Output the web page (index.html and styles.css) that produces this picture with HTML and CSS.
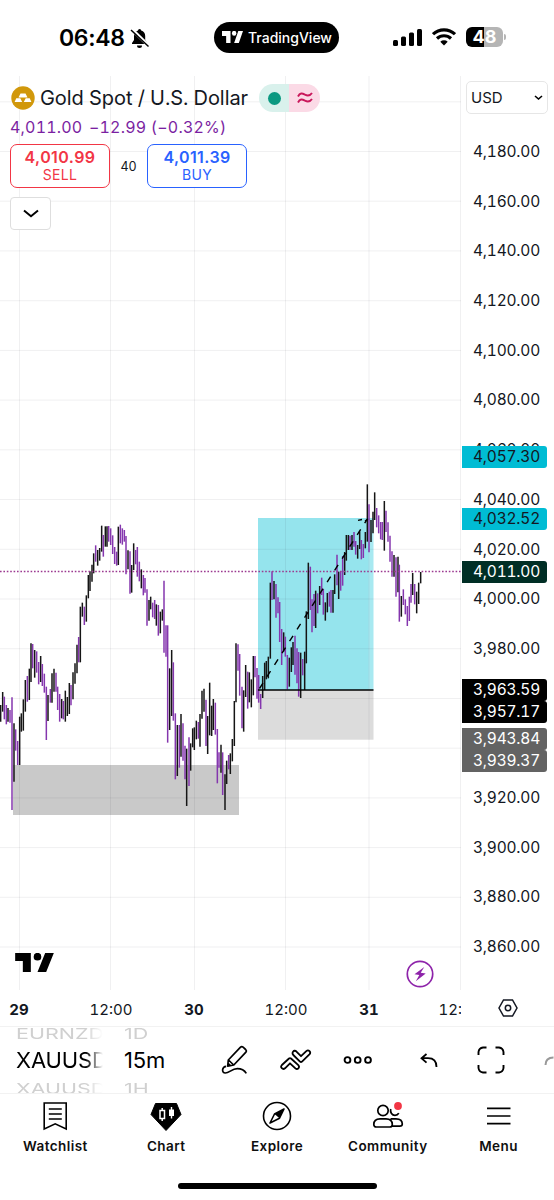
FILE: index.html
```html
<!DOCTYPE html>
<html lang="en">
<head>
    <meta charset="UTF-8">
    <meta name="viewport" content="width=device-width, initial-scale=1.0">
    <title>XAUUSD Chart</title>
    <link rel="stylesheet" href="styles.css">
</head>
<body>
    <div class="app">
        <!-- Status bar -->
        <header class="status-bar">
            <div class="clock">
                <span>06:48</span>
                <svg width="20" height="21" viewBox="0 0 20 21">
                    <path d="M2 16v-1l2-3V8c0-3 2-5 4-5.500a1.600 1.600 0 0 1 3.200 0c2.500.8 4 2.800 4 5.500v4l2 3v1zM7 17.500h5a2.500 2.500 0 0 1-5 0z" fill="#000"/>
                    <path d="M2 1.500 19 18" stroke="#fff" stroke-width="3.200"/>
                    <path d="M1 2 18.500 18.500" stroke="#000" stroke-width="1.500"/>
                </svg>
            </div>
            <div class="island">
                <svg width="21" height="12" viewBox="0 0 116 57" preserveAspectRatio="none" fill="#fff">
                    <path d="M0 0h47v57H23V24H0zM90 0h26L93 57H67z"/><circle cx="67" cy="11" r="12"/>
                </svg>
                <span>TradingView</span>
            </div>
            <div class="indicators">
                <svg width="29" height="19" viewBox="0 0 29 19">
                    <rect x="0" y="12" width="5" height="6" rx="1.500"/><rect x="8" y="8.500" width="5" height="9.500" rx="1.500"/>
                    <rect x="16" y="4.500" width="5" height="13.500" rx="1.500"/><rect x="24" y="1" width="5" height="17" rx="1.500"/>
                </svg>
                <svg width="24" height="18" viewBox="0 0 24 18" fill="none" stroke="#000" stroke-width="3.200">
                    <path d="M1 6.200a16 16 0 0 1 22 0M5 10.500a10.300 10.300 0 0 1 14 0"/><path d="M8.300 13.800a5.500 5.500 0 0 1 7.400 0L12 17.500z" fill="#000" stroke="none"/>
                </svg>
                <div class="battery"><span>48</span></div>
            </div>
        </header>

        <main class="chart">
            <div class="plot">
                <svg class="plot-svg" width="461" height="914" viewBox="0 76 461 914">
                    <!-- Drawn zones -->
                    <rect x="13" y="765" width="226" height="50" fill="#c9c9c9"/>
                    <rect x="258" y="518" width="115.500" height="172" fill="#a8e9f1"/>
                    <rect x="258" y="518" width="110.500" height="172" fill="#95e4ed"/>
                    <rect x="258" y="690" width="115.500" height="49.700" fill="#dcdcdc"/>
                    <!-- Grid -->
                    <path class="grid" d="M19.500 76V990M110.500 76V990M194.500 76V990M285.500 76V990M369 76V990M460.500 76V990"/>
                    <path class="grid" d="M0 101.800H461M0 151.500H461M0 201.200H461M0 250.900H461M0 300.700H461M0 350.400H461M0 400.100H461M0 449.800H461M0 499.500H461M0 549.300H461M0 599H461M0 648.700H461M0 698.500H461M0 748.200H461M0 797.900H461M0 847.600H461M0 897.300H461M0 947H461"/>
                    <!-- Bars -->
                    <g id="bars"></g>
                    <path d="M0 571.500H461" stroke="#9c3a91" stroke-width="1.700" stroke-dasharray="1.600 1.800"/>
                    <path d="M258 690H373.500" stroke="#000" stroke-width="1.500"/>
                    <path d="M259.500 688.500 367 519.500" stroke="#000" stroke-width="1.400" stroke-dasharray="6.500 7.500" fill="none"/>
                    <path d="M358 520.300 362 519.500M365 521l3-2" stroke="#000" stroke-width="1.300"/>
                </svg>

                <section class="legend">
                    <div class="symbol">
                        <svg width="24" height="24" viewBox="0 0 24 24">
                            <circle cx="12" cy="12" r="11.700" fill="#d1980b"/>
                            <path d="M9.500 7.500h5l2 4h-9zM5.300 12.300h4l1.900 3.700H3.600zM14.700 12.300h4l1.700 3.700h-7.600z" fill="#fff"/>
                        </svg>
                        <h1>Gold Spot / U.S. Dollar</h1>
                        <div class="market">
                            <span class="open"><i></i></span>
                            <span class="derived">
                                <svg width="16" height="12" viewBox="0 0 16 12" fill="none" stroke="#c9185b" stroke-width="1.900"><path d="M1 4.500c2-4 4-3.500 7-1.800 3 1.600 5 1.200 7-1.700M1 10.500c2-4 4-3.500 7-1.800 3 1.600 5 1.200 7-1.700"/></svg>
                            </span>
                        </div>
                    </div>
                    <div class="change">4,011.00 <span>−12.99 (−0.32%)</span></div>
                    <div class="quotes">
                        <button class="quote sell"><b>4,010.99</b><span>SELL</span></button>
                        <span class="spread">40</span>
                        <button class="quote buy"><b>4,011.39</b><span>BUY</span></button>
                    </div>
                    <button class="collapse">
                        <svg width="16" height="9" viewBox="0 0 16 9" fill="none" stroke="#000" stroke-width="2"><path d="m1 1.500 7 5.700 7-5.700"/></svg>
                    </button>
                </section>

                <svg class="logo" width="39" height="19" viewBox="0 0 116 57" fill="#000">
                    <path d="M0 0h47v57H23V24H0zM90 0h26L93 57H67z"/><circle cx="67" cy="11" r="11.500"/>
                </svg>
                <svg class="flash" width="28" height="28" viewBox="0 0 28 28">
                    <circle cx="14" cy="14" r="12.700" fill="#fff" stroke="#8e24aa" stroke-width="1.700"/>
                    <path d="M18.300 7 8.500 14.200l4.800.8-3.500 6.200 9.900-7.700-5-.8z" fill="#8e24aa"/>
                </svg>
            </div>

            <aside class="price-axis">
                <div class="currency">USD
                    <svg width="9" height="6" viewBox="0 0 9 6" fill="none" stroke="#000" stroke-width="1.600"><path d="m1 1 3.500 3L8 1"/></svg>
                </div>
                <div class="prices">
                    <span>4,180.00</span><span>4,160.00</span><span>4,140.00</span><span>4,120.00</span>
                    <span>4,100.00</span><span>4,080.00</span><span>4,060.00</span><span>4,040.00</span>
                    <span>4,020.00</span><span>4,000.00</span><span>3,980.00</span><span></span>
                    <span></span><span>3,920.00</span><span>3,900.00</span><span>3,880.00</span><span>3,860.00</span>
                </div>
                <span class="tag target t1">4,057.30</span>
                <span class="tag target t2">4,032.52</span>
                <span class="tag last">4,011.00</span>
                <span class="tag entry t3">3,963.59</span>
                <span class="tag entry t4">3,957.17</span>
                <span class="tag stop t5">3,943.84</span>
                <span class="tag stop t6">3,939.37</span>
            </aside>
        </main>

        <div class="time-axis">
            <svg width="461" height="36" viewBox="0 0 461 36">
                <text class="day" x="19" y="25">29</text>
                <text x="111" y="25">12:00</text>
                <text class="day" x="194" y="25">30</text>
                <text x="286" y="25">12:00</text>
                <text class="day" x="369" y="25">31</text>
                <text x="460" y="25">12:00</text>
            </svg>
            <div class="axis-settings">
                <svg width="20" height="18" viewBox="0 0 20 18" fill="none" stroke="#131722" stroke-width="1.500"><path d="M5.500 1h9L19 9l-4.500 8h-9L1 9z"/><circle cx="10" cy="9" r="2.700"/></svg>
            </div>
        </div>

        <div class="toolbar">
            <div class="wheel wheel-symbol"><span>EURNZD</span><b>XAUUSD</b><span>XAUUSD</span></div>
            <div class="wheel wheel-interval"><span>1D</span><b>15m</b><span>1H</span></div>
            <div class="tools">
                <svg width="28" height="30" viewBox="0 0 28 30" fill="none" stroke="#000" stroke-width="1.700" stroke-linejoin="round">
                    <path d="M7.300 15 19.300 2.300q1.400-1.400 2.800-.1l2.500 2.300q1.400 1.400.1 2.800L12.800 20l-6.100 1.200zM7.500 15l5.200 5M7 18.300l2.700 2.600"/>
                    <path d="M5.200 21.300C1 21.500.2 28 4.300 28c4 0 6.500-4.300 12-4.300 4.300 0 7.200 1.800 9 4.700"/>
                </svg>
                <svg width="32" height="22" viewBox="0 0 32 22" fill="none" stroke="#000" stroke-width="1.800" stroke-linejoin="round">
                    <path d="m1.900 16 7.100-6.500q1-.8 2 0l7.300 6.700c2 2.200-.8 5-2.900 3.200L10 14.300l-5 5c-2.300 1.900-5.200-1.100-3.100-3.300z"/>
                    <path d="M13.300 6c-2-2.500.8-5.500 2.900-3.700L21 7.200l5.300-5.100c2.300-1.900 5.200 1.100 3.100 3.300L22 12.600q-1 .8-2 0z"/>
                </svg>
                <svg width="30" height="10" viewBox="0 0 30 10" fill="none" stroke="#000" stroke-width="1.900"><circle cx="4.500" cy="5" r="2.900"/><circle cx="14.700" cy="5" r="2.900"/><circle cx="25" cy="5" r="2.900"/></svg>
                <i class="divider"></i>
                <svg width="18" height="15" viewBox="0 0 18 15" fill="none" stroke="#000" stroke-width="1.800"><path d="M6.500 1 1.500 5.200l5 4.500M1.500 5.200h6.500c6 0 8.500 3.500 8.500 8.800"/></svg>
                <svg width="28" height="28" viewBox="0 0 28 28" fill="none" stroke="#000" stroke-width="1.900"><path d="M1.500 9V6Q2 2 6 1.500H9.500M18.500 1.500H22Q26 2 26.500 6V9M26.500 19v3q-.5 4-4.500 4.500h-3.500M9.500 26.500H6Q2 26 1.500 22v-3"/></svg>
                <svg width="10" height="12" viewBox="0 0 10 12" fill="none" stroke="#999" stroke-width="2"><path d="M1.500 11c0-5 3-7.500 8-7.500"/></svg>
            </div>
        </div>

        <nav class="tabs">
            <a>
                <svg width="30" height="30" viewBox="0 0 30 30" fill="none" stroke="#000" stroke-width="1.600"><path d="M4.200 2h22v26L15.200 22.800 4.200 28zM8.800 8h13M8.800 13h13M8.800 18h13"/></svg>
                Watchlist
            </a>
            <a>
                <svg width="32" height="30" viewBox="0 0 32 30"><path d="M5.500 2.500h21l4.500 11L16 29.500 1 13.500z" stroke="#000" stroke-linejoin="round"/><path d="M10 9.500h4.500v8H10zM12.200 7v2.500M12.200 17.500V20" fill="none" stroke="#fff" stroke-width="1.500"/><path d="M19 8.500h5v6.500h-5zM20.800 6h1.400v11.500h-1.400z" fill="#fff"/></svg>
                Chart
            </a>
            <a>
                <svg width="30" height="30" viewBox="0 0 30 30"><circle cx="15" cy="15" r="13.500" fill="none" stroke="#000" stroke-width="1.600"/><path d="m22 8-9.500 5L8 22l9.500-4.800z" fill="none" stroke="#000" stroke-width="1.600" stroke-linejoin="round"/><path d="m22 8-9.500 5 5 4.200z"/></svg>
                Explore
            </a>
            <a>
                <svg width="32" height="30" viewBox="0 0 32 30" fill="none" stroke="#000" stroke-width="1.700">
                    <circle cx="11" cy="9.500" r="5.200"/><path d="M18.700 8c-.7 3.500 1.300 6.300 4.300 6.300 1.500 0 3-.8 3.800-2.200M8 17.800h6c4 0 6.300 2.200 6.300 5.700 0 1.500-1 2.500-2.500 2.500H4.300c-1.500 0-2.500-1-2.500-2.500 0-3.500 2.200-5.700 6.200-5.700zM18.500 17.800H24c4 0 6.300 2 6.300 5.200 0 1.500-1 2.200-2.500 2.200h-8"/>
                    <circle cx="26" cy="5" r="3.900" fill="#f23645" stroke="none"/>
                </svg>
                Community
            </a>
            <a>
                <svg width="30" height="30" viewBox="0 0 30 30" stroke="#000" stroke-width="1.700"><path d="M3 7.300h23.500M3 15h23.500M3 22.700h23.500"/></svg>
                Menu
            </a>
        </nav>
        <div class="home-indicator"></div>
    </div>
    <script src="chart.js"></script>
</body>
</html>
```
FILE: styles.css
```css
* {
    box-sizing: border-box;
}
body {
    margin: 0;
    background: #fff;
    color: #131722;
    font-family: 'Inter', sans-serif;
}
button {
    font-family: inherit;
    background: #fff;
    padding: 0;
}
svg {
    display: block;
    flex: none;
}
.app {
    width: 554px;
    height: 1200px;
    overflow: hidden;
    display: flex;
    flex-direction: column;
}

/* Status bar */
.status-bar {
    height: 76px;
    flex: none;
    display: grid;
    grid-template-columns: 214px 125px 1fr;
    align-items: center;
    color: #000;
}
.clock {
    display: flex;
    align-items: center;
    gap: 5px;
    padding-left: 59px;
    font-size: 23px;
    font-weight: 600;
    letter-spacing: -0.3px;
}
.island {
    height: 31px;
    margin-top: -2px;
    border-radius: 16px;
    background: #000;
    color: #fff;
    display: flex;
    align-items: center;
    gap: 5px;
    padding-left: 8px;
    font-size: 14px;
    font-weight: 500;
}
.indicators {
    display: flex;
    align-items: center;
    gap: 10px;
    padding-left: 54px;
    margin-top: -2px;
}
.battery {
    position: relative;
    width: 37px;
    height: 20px;
    border-radius: 6px;
    background: linear-gradient(90deg, #000 48%, #b5b5b5 48%);
    color: #fff;
    font-size: 18px;
    font-weight: 700;
    line-height: 20px;
    text-align: center;
}
.battery::after {
    content: "";
    position: absolute;
    right: -3px;
    top: 7px;
    width: 2px;
    height: 6px;
    border-radius: 0 2px 2px 0;
    background: #b5b5b5;
}

/* Chart */
.chart {
    height: 914px;
    flex: none;
    display: flex;
    font-variant-numeric: tabular-nums;
}
.plot {
    position: relative;
    width: 461px;
}
.plot-svg {
    position: absolute;
    inset: 0;
}
.grid {
    stroke: #2a2e39;
    stroke-opacity: 0.07;
    fill: none;
}
.bar {
    stroke-width: 1.5;
    fill: none;
}
.bar.up {
    stroke: #151515;
}
.bar.down {
    stroke: #8436ae;
}
.legend {
    position: relative;
    padding: 8px 0 0 10px;
}
.symbol {
    display: flex;
    align-items: center;
    height: 28px;
    padding-left: 1px;
}
.symbol h1 {
    margin: 0 11px 0 5px;
    font-size: 20px;
    font-weight: 400;
    letter-spacing: -0.07px;
    white-space: nowrap;
}
.market {
    display: flex;
    height: 28px;
    border-radius: 14px;
    overflow: hidden;
}
.market span {
    width: 30px;
    display: flex;
    align-items: center;
    justify-content: center;
}
.market .open {
    background: #d9f1ec;
}
.open i {
    width: 13px;
    height: 13px;
    border-radius: 50%;
    background: #0b9981;
}
.market .derived {
    background: #fbdae6;
    width: 31px;
}
.change {
    height: 32px;
    line-height: 31px;
    font-size: 16px;
    letter-spacing: 0.2px;
    color: #7b1fa2;
    white-space: nowrap;
}
.change span {
    margin-left: 2px;
}
.quotes {
    display: flex;
    align-items: center;
}
.quote {
    width: 100px;
    height: 44px;
    border: 1.5px solid;
    border-radius: 7px;
    display: flex;
    flex-direction: column;
    align-items: center;
    justify-content: center;
    font-size: 14px;
    line-height: 18px;
    letter-spacing: 0.3px;
}
.quote b {
    font-size: 16px;
    font-weight: 600;
    letter-spacing: 0.4px;
}
.sell {
    color: #f23645;
}
.buy {
    color: #2962ff;
}
.spread {
    width: 37px;
    text-align: center;
    font-size: 12.5px;
}
.collapse {
    width: 41px;
    height: 33px;
    margin-top: 9px;
    border: 1.5px solid #dedede;
    border-radius: 4px;
    display: flex;
    align-items: center;
    justify-content: center;
}
.logo {
    position: absolute;
    left: 15px;
    top: 877px;
}
.flash {
    position: absolute;
    left: 406px;
    top: 884px;
}

/* Price axis */
.price-axis {
    position: relative;
    width: 93px;
    padding-top: 5px;
    font-size: 15.5px;
    letter-spacing: -0.2px;
}
.currency {
    width: 82px;
    height: 33px;
    margin-left: 5px;
    padding: 0 4px;
    border: 1.5px solid #e6e6e6;
    border-radius: 5px;
    display: flex;
    align-items: center;
    justify-content: space-between;
    font-size: 15px;
    letter-spacing: 0;
}
.prices {
    padding-top: 13px;
}
.prices span {
    display: block;
    height: 49.7px;
    line-height: 50px;
    padding-left: 12px;
}
.tag {
    position: absolute;
    left: 1px;
    width: 85px;
    height: 22px;
    padding-left: 11px;
    line-height: 21px;
    border-radius: 0 3px 3px 0;
    color: #fff;
}
.target {
    background: #00bcd4;
    color: #131722;
}
.last {
    top: 485px;
    background: #002e25;
}
.entry {
    background: #000;
}
.stop {
    background: #636363;
}
.t1 { top: 370px; }
.t2 { top: 432px; }
.t3 { top: 603px; }
.t4 { top: 625px; }
.t5 { top: 652px; }
.t6 { top: 674px; }

/* Time axis */
.time-axis {
    height: 36px;
    flex: none;
    display: flex;
    font-variant-numeric: tabular-nums;
}
.time-axis text {
    font-size: 15px;
    text-anchor: middle;
    fill: #131722;
}
.time-axis .day {
    font-weight: 700;
}
.axis-settings {
    width: 93px;
    display: flex;
    align-items: center;
    justify-content: center;
}

/* Toolbar */
.toolbar {
    height: 68px;
    flex: none;
    display: flex;
    border-top: 1px solid #f2f2f2;
    border-bottom: 1px solid #f2f2f2;
    overflow: hidden;
    color: #000;
}
.wheel {
    display: flex;
    flex-direction: column;
    justify-content: center;
    flex: none;
    white-space: nowrap;
}
.wheel b {
    font-size: 22px;
    font-weight: 400;
    line-height: 33px;
    letter-spacing: -0.1px;
}
.wheel span {
    font-size: 21.5px;
    line-height: 22px;
    color: #d0d0d0;
    transform: scaleY(0.7);
}
.wheel-symbol {
    width: 87px;
    margin-left: 16px;
    overflow: hidden;
    mask-image: linear-gradient(90deg, #000 80%, transparent 100%);
}
.wheel-interval {
    width: 60px;
    margin-left: 21px;
}
.tools {
    flex: 1;
    display: flex;
    align-items: center;
    padding-left: 37px;
    gap: 31px;
    overflow: hidden;
}
.divider {
    width: 1px;
    height: 24px;
    margin: 0 -5px 0 -10px;
    background: #eee;
}
.tools svg:nth-last-child(2) {
    margin-left: 8px;
}
.tools svg:last-child {
    margin-left: 8px;
}

/* Tabs */
.tabs {
    height: 83px;
    flex: none;
    display: grid;
    grid-template-columns: repeat(5, 1fr);
    color: #0f0f0f;
    font-size: 13.5px;
    font-weight: 600;
    letter-spacing: 0.45px;
}
.tabs a {
    display: flex;
    flex-direction: column;
    align-items: center;
    gap: 7px;
    padding-top: 7px;
}
.home-indicator {
    width: 199px;
    height: 6px;
    margin: 6px auto 0;
    border-radius: 3px;
    background: #000;
}
```
FILE: chart.js
```js
// Each bar: x, high, low, direction (u/d). One block per part of the session.
const sessions = [
    { x: 0, y: 510, bars: '2 585 635 u,8 546 605 u,13 560 628 d,19 585 643 d,24 594 635 u,30 600 638 d,36 562 900 d,42 640 815 u,47 658 722 d,53 693 765 d,59 620 765 u,64 610 665 u,70 568 662 u,76 510 605 u,82 498 575 d,88 476 570 u,93 400 516 u,98 402 475 d,104 420 503 u,110 424 488 d,116 456 523 d,122 438 516 u,127 462 528 d,133 491 548 d,139 530 690 d,144 555 633 u,151 537 578 d,156 490 578 u,162 476 545 u,168 488 545 d,173 530 600 d,179 552 635 d,185 567 625 u,190 573 628 d,196 542 635 u,202 561 618 u,208 519 612 u,213 525 586 d,219 487 568 u,225 460 521 u,231 404 490 u,236 381 457 d,241 290 457 u,247 278 320 u,253 290 345 d,259 256 335 u,265 195 265 u,270 184 243 u,276 164 215 u,281 130 190 u,287 106 155 d,293 120 167 u,299 114 152 u,305 47 125 u,310 75 140 d,316 49 110 u,321 49 110 u,326 48 95 d,332 55 105 d,338 76 132 d,344 111 162 d,350 125 167 d,355 50 165 u' },
    { x: 120, y: 510, bars: '1 44 100 d,7 55 104 d,13 60 95 d,18 78 193 d,24 121 178 u,30 124 251 d,35 165 248 u,41 100 180 u,47 120 163 d,52 111 200 d,58 155 214 d,64 178 235 u,70 195 256 d,75 204 248 d,81 238 347 d,87 270 332 u,92 260 298 u,98 278 322 d,104 270 327 d,109 283 347 u,115 285 377 d,121 305 370 u,127 298 332 u,132 212 428 d,138 346 440 d,143 346 698 d,149 475 660 u,155 420 618 u,160 457 632 d,166 610 808 d,172 645 798 u,178 645 773 d,183 612 740 u,189 640 752 d,195 707 808 d,200 716 888 u,207 682 828 d,212 700 782 u,218 655 712 u,223 652 720 u,229 632 688 u,235 636 686 d,240 612 710 u,246 542 626 u,252 536 605 u,258 569 708 d,263 618 732 u,269 518 676 u,275 587 678 u,280 567 660 u,286 578 674 d,292 657 820 d,297 727 773 d,303 704 788 u,308 727 855 d,315 793 900 u,320 752 822 u,326 735 778 d,331 730 792 u,337 687 754 u,343 573 708 u,348 400 577 u,354 403 482 d,359 432 557 d,366 530 655 d,371 541 665 u,377 465 561 u,383 485 596 d,388 487 577 u' },
    { x: 250, y: 470, bars: '4 628 712 u,10 558 676 u,15 558 622 d,21 594 686 d,26 615 698 d,32 672 717 d,38 618 684 u,44 578 660 u,49 573 628 u,55 560 625 u,61 338 566 u,66 304 390 d,72 333 388 u,78 342 443 d,84 382 430 d,89 396 516 d,95 477 585 d,101 487 545 u,106 500 560 d,112 555 658 d,118 563 650 u,124 532 606 u,129 516 585 u,135 497 614 d,141 535 640 d,146 546 680 d,152 548 684 u,158 567 616 d,164 545 660 u,169 424 580 u,175 278 447 u,181 290 420 d,186 388 487 d,192 372 468 d,197 362 474 u,203 370 430 d,209 348 405 u,215 323 375 d,220 357 434 d,226 397 452 u,232 369 427 u,238 365 410 d,243 360 428 d,249 360 428 u,254 313 372 u,261 254 346 d,266 305 387 u,272 303 362 d,278 258 347 d,284 246 315 u,289 195 272 u,295 195 240 u,300 197 240 d,306 195 240 u,312 186 230 d,317 213 254 d,323 225 266 u,329 184 237 u,334 210 268 d,340 222 264 d,346 186 235 u,352 43 215 u,357 103 247 d,363 150 216 u,369 125 190 u,374 67 150 u,380 114 172 d,386 136 190 d,392 156 208 d,397 156 210 d,403 93 242 u,408 122 186 d,414 157 215 d,420 197 275 d,426 244 320 d,432 255 320 u,438 262 380 d,444 260 367 u,448 284 455 d,454 378 440 u,460 358 405 d,466 388 433 d,472 408 468 d,478 380 453 d,483 342 398 d,488 309 375 u,494 342 403 d,500 365 430 u,506 338 402 u,512 306 340 u' }
];

const scale = 3;
const group = document.getElementById('bars');

sessions.forEach(session => {
    session.bars.split(',').forEach(bar => {
        const [x, high, low, dir] = bar.split(' ');
        const px = session.x + x / scale;
        const path = document.createElementNS('http://www.w3.org/2000/svg', 'path');
        path.setAttribute('class', dir === 'u' ? 'bar up' : 'bar down');
        path.setAttribute('d', `M${px} ${session.y + high / scale}V${session.y + low / scale}`);
        group.appendChild(path);
    });
});
```
